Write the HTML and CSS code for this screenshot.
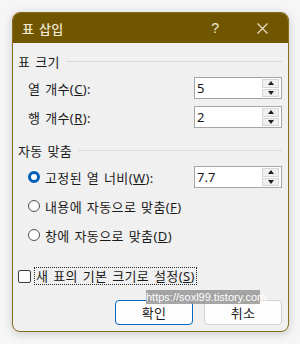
FILE: index.html
```html
<!DOCTYPE html>
<html lang="ko">
	<head>
		<meta charset="UTF-8" />
		<title>표 삽입</title>
		<link rel="stylesheet" href="styles.css">
	</head>
	<body>
		<div class="dialog">
			<div class="titlebar">
				<span class="title">표 삽입</span>
				<span class="help">?</span>
				<svg class="close" width="11" height="11" viewBox="0 0 11 11">
					<path d="M0.5 0.5 L10.5 10.5 M10.5 0.5 L0.5 10.5" stroke="#eee3c8" stroke-width="1.1" fill="none" />
				</svg>
			</div>
			<div class="content">
				<div class="group">
					<span>표 크기</span>
					<div class="rule"></div>
				</div>
				<div class="row">
					<span class="label">열 개수(<u>C</u>):</span>
					<div class="spin">
						<span class="value">5</span>
						<div class="arrows">
							<div class="arrow"><div class="up"></div></div>
							<div class="arrow"><div class="down"></div></div>
						</div>
					</div>
				</div>
				<div class="row">
					<span class="label">행 개수(<u>R</u>):</span>
					<div class="spin">
						<span class="value">2</span>
						<div class="arrows">
							<div class="arrow"><div class="up"></div></div>
							<div class="arrow"><div class="down"></div></div>
						</div>
					</div>
				</div>
				<div class="group second">
					<span>자동 맞춤</span>
					<div class="rule"></div>
				</div>
				<div class="row">
					<span class="option"><span class="radio checked"></span><span>고정된 열 너비(<u>W</u>):</span></span>
					<div class="spin">
						<span class="value">7.7</span>
						<div class="arrows">
							<div class="arrow"><div class="up"></div></div>
							<div class="arrow"><div class="down"></div></div>
						</div>
					</div>
				</div>
				<div class="row">
					<span class="option"><span class="radio"></span><span>내용에 자동으로 맞춤(<u>F</u>)</span></span>
				</div>
				<div class="row">
					<span class="option"><span class="radio"></span><span>창에 자동으로 맞춤(<u>D</u>)</span></span>
				</div>
				<div class="row check-row">
					<span class="checkbox"></span>
					<span class="focus">새 표의 기본 크기로 설정(<u>S</u>)</span>
				</div>
				<div class="buttons">
					<button class="primary">확인</button>
					<button>취소</button>
				</div>
			</div>
			<div class="watermark">https://soxl99.tistory.com</div>
		</div>
	</body>
</html>
```

FILE: styles.css
```css
* {
	box-sizing: border-box;
	font-family: "Noto Sans", "Noto Sans CJK KR", sans-serif;
}
body {
	margin: 0;
	width: 300px;
	height: 344px;
	background-color: rgb(246, 246, 246);
	padding: 12px 11px 0 12px;
}
.dialog {
	position: relative;
	width: 277px;
	height: 320px;
	border: 1px solid rgb(139, 108, 30);
	border-radius: 8px;
	background-color: rgb(240, 240, 240);
	overflow: hidden;
	box-shadow: 0 2px 10px rgba(0, 0, 0, 0.18);
	display: flex;
	flex-direction: column;
}
.titlebar {
	height: 30px;
	background-color: rgb(112, 86, 0);
	color: rgb(240, 232, 212);
	display: flex;
	align-items: center;
	padding-left: 9px;
	font-size: 13px;
}
.title {
	flex: 1;
	font-weight: 500;
	word-spacing: 1px;
	letter-spacing: 0.3px;
}
.help {
	font-family: "Liberation Sans", sans-serif;
	font-size: 14px;
	margin-right: 38px;
}
.close {
	margin-right: 20px;
}
.content {
	display: flex;
	flex-direction: column;
	padding: 0 6px 0 5px;
	font-size: 13px;
	letter-spacing: 0.4px;
	word-spacing: 1px;
	color: rgb(26, 26, 26);
}
.group {
	height: 18px;
	margin-top: 9px;
	display: flex;
	align-items: center;
	gap: 6px;
}
.group.second {
	margin-top: 13px;
}
.rule {
	flex: 1;
	height: 1px;
	background-color: rgb(218, 218, 218);
}
.row {
	height: 22px;
	margin-top: 7px;
	display: flex;
	align-items: center;
	justify-content: space-between;
	padding-left: 10px;
}
.spin {
	width: 88px;
	height: 22px;
	border: 1px solid rgb(166, 166, 166);
	background-color: white;
	display: flex;
	align-items: center;
	padding: 1px;
}
.value {
	flex: 1;
	padding-left: 1px;
	font-size: 13px;
	letter-spacing: 0;
	color: rgb(20, 20, 20);
}
.arrows {
	width: 17px;
	height: 18px;
	display: flex;
	flex-direction: column;
	gap: 1px;
	margin-right: 1px;
}
.arrow {
	flex: 1;
	background-color: rgb(240, 240, 240);
	border: 1px solid rgb(214, 214, 214);
	display: flex;
	align-items: center;
	justify-content: center;
}
.up {
	border-left: 3.5px solid transparent;
	border-right: 3.5px solid transparent;
	border-bottom: 4px solid rgb(30, 30, 30);
}
.down {
	border-left: 3.5px solid transparent;
	border-right: 3.5px solid transparent;
	border-top: 4px solid rgb(30, 30, 30);
}
.option {
	display: flex;
	align-items: center;
	gap: 5px;
}
.radio {
	width: 12px;
	height: 12px;
	border-radius: 50%;
	border: 1px solid rgb(80, 80, 80);
	background-color: white;
}
.radio.checked {
	border: 3.5px solid rgb(0, 95, 184);
}
.check-row {
	margin-top: 19px;
	justify-content: flex-start;
	padding-left: 0;
	gap: 3px;
}
.checkbox {
	width: 13px;
	height: 13px;
	border: 1px solid rgb(60, 60, 60);
	border-radius: 2px;
	background-color: rgb(250, 250, 250);
}
.focus {
	border: 1px dotted rgb(40, 40, 40);
	padding: 0 1px;
	line-height: 16px;
}
.buttons {
	margin-top: 13px;
	display: flex;
	justify-content: flex-end;
	gap: 11px;
}
button {
	width: 78px;
	height: 25px;
	border: 1px solid rgb(210, 210, 210);
	border-radius: 4px;
	background-color: rgb(253, 253, 253);
	font-size: 13px;
	letter-spacing: 0.4px;
	color: rgb(26, 26, 26);
	padding: 0;
}
button.primary {
	border: 1px solid rgb(0, 103, 192);
}
.watermark {
	position: absolute;
	left: 133px;
	top: 277px;
	width: 114px;
	height: 14px;
	background-color: rgba(150, 150, 150, 0.85);
	color: white;
	font-family: "Liberation Sans", sans-serif;
	font-size: 11px;
	letter-spacing: 0;
	word-spacing: 0;
	line-height: 14px;
	text-align: center;
}
```
